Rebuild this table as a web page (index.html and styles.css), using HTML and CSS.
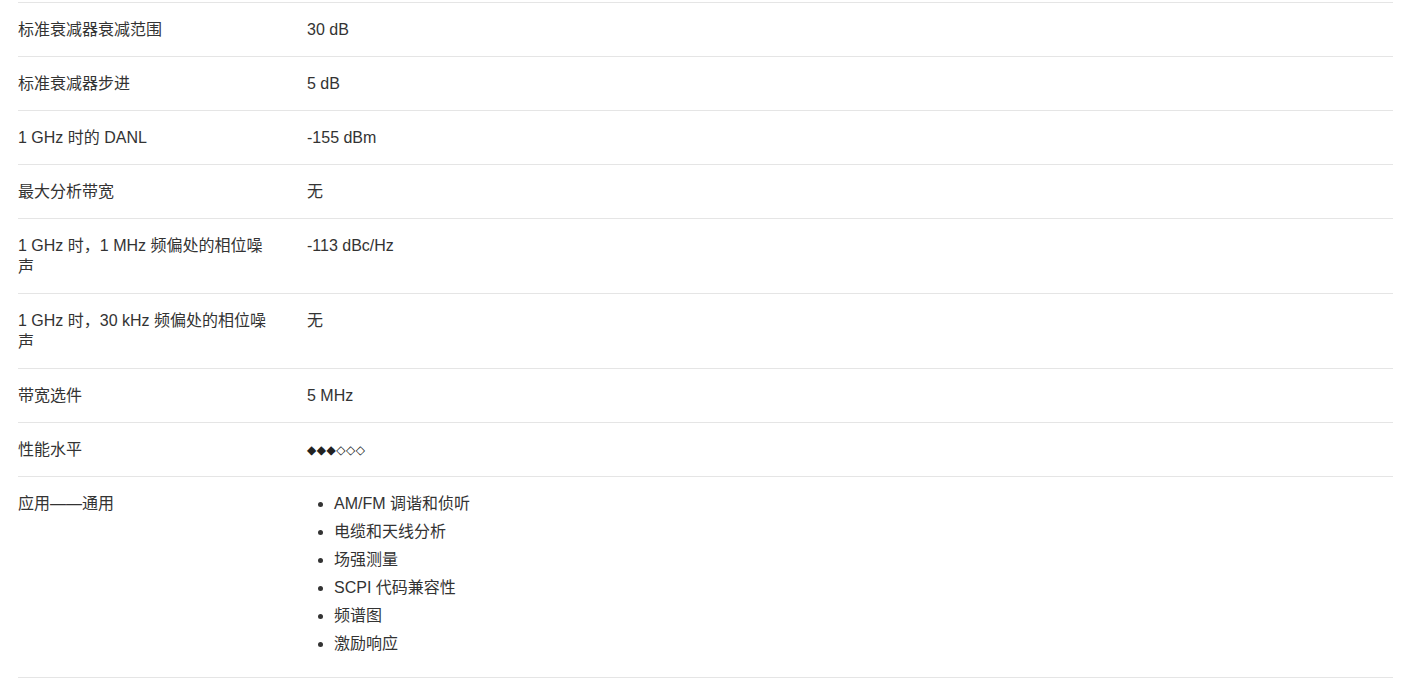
FILE: index.html
```html
<!DOCTYPE html>
<html lang="zh-CN">
<head>
<meta charset="utf-8">
<title>规格</title>
<link rel="stylesheet" href="styles.css">
</head>
<body>
<div class="specs">
  <div class="row"><div class="label">标准衰减器衰减范围</div><div class="value">30 dB</div></div>
  <div class="row"><div class="label">标准衰减器步进</div><div class="value">5 dB</div></div>
  <div class="row"><div class="label">1 GHz 时的 DANL</div><div class="value">-155 dBm</div></div>
  <div class="row"><div class="label">最大分析带宽</div><div class="value">无</div></div>
  <div class="row"><div class="label">1 GHz 时，1 MHz 频偏处的相位噪声</div><div class="value">-113 dBc/Hz</div></div>
  <div class="row"><div class="label">1 GHz 时，30 kHz 频偏处的相位噪声</div><div class="value">无</div></div>
  <div class="row"><div class="label">带宽选件</div><div class="value">5 MHz</div></div>
  <div class="row"><div class="label">性能水平</div><div class="value"><span class="rating">◆◆◆◇◇◇</span></div></div>
  <div class="row"><div class="label">应用——通用</div><div class="value">
    <ul class="apps">
      <li>AM/FM 调谐和侦听</li>
      <li>电缆和天线分析</li>
      <li>场强测量</li>
      <li>SCPI 代码兼容性</li>
      <li>频谱图</li>
      <li>激励响应</li>
    </ul>
  </div></div>
</div>
</body>
</html>
```
FILE: styles.css
```css
html, body {
  margin: 0;
  padding: 0;
  background: #ffffff;
}

body {
  font-family: "Liberation Sans", Arial, "Noto Sans CJK SC", sans-serif;
  font-size: 16px;
  line-height: 21px;
  color: #333333;
}

.specs {
  padding: 2px 16px 0 18px;
}

.row {
  display: grid;
  grid-template-columns: 289px 1fr;
  border-top: 1px solid #e5e5e5;
}

.row:last-child {
  border-bottom: 1px solid #e5e5e5;
}

.label {
  padding: 16px 36px 16px 0;
}

.value {
  padding: 16px 0;
}

.rating {
  display: inline-block;
  height: 21px;
  line-height: 23px;
  vertical-align: top;
  font-family: "DejaVu Sans", sans-serif;
  font-size: 12px;
  color: #222222;
  letter-spacing: 0.5px;
}

.apps {
  margin: 0;
  padding: 0 0 0 27px;
}

.apps li {
  margin-bottom: 7px;
}
```
